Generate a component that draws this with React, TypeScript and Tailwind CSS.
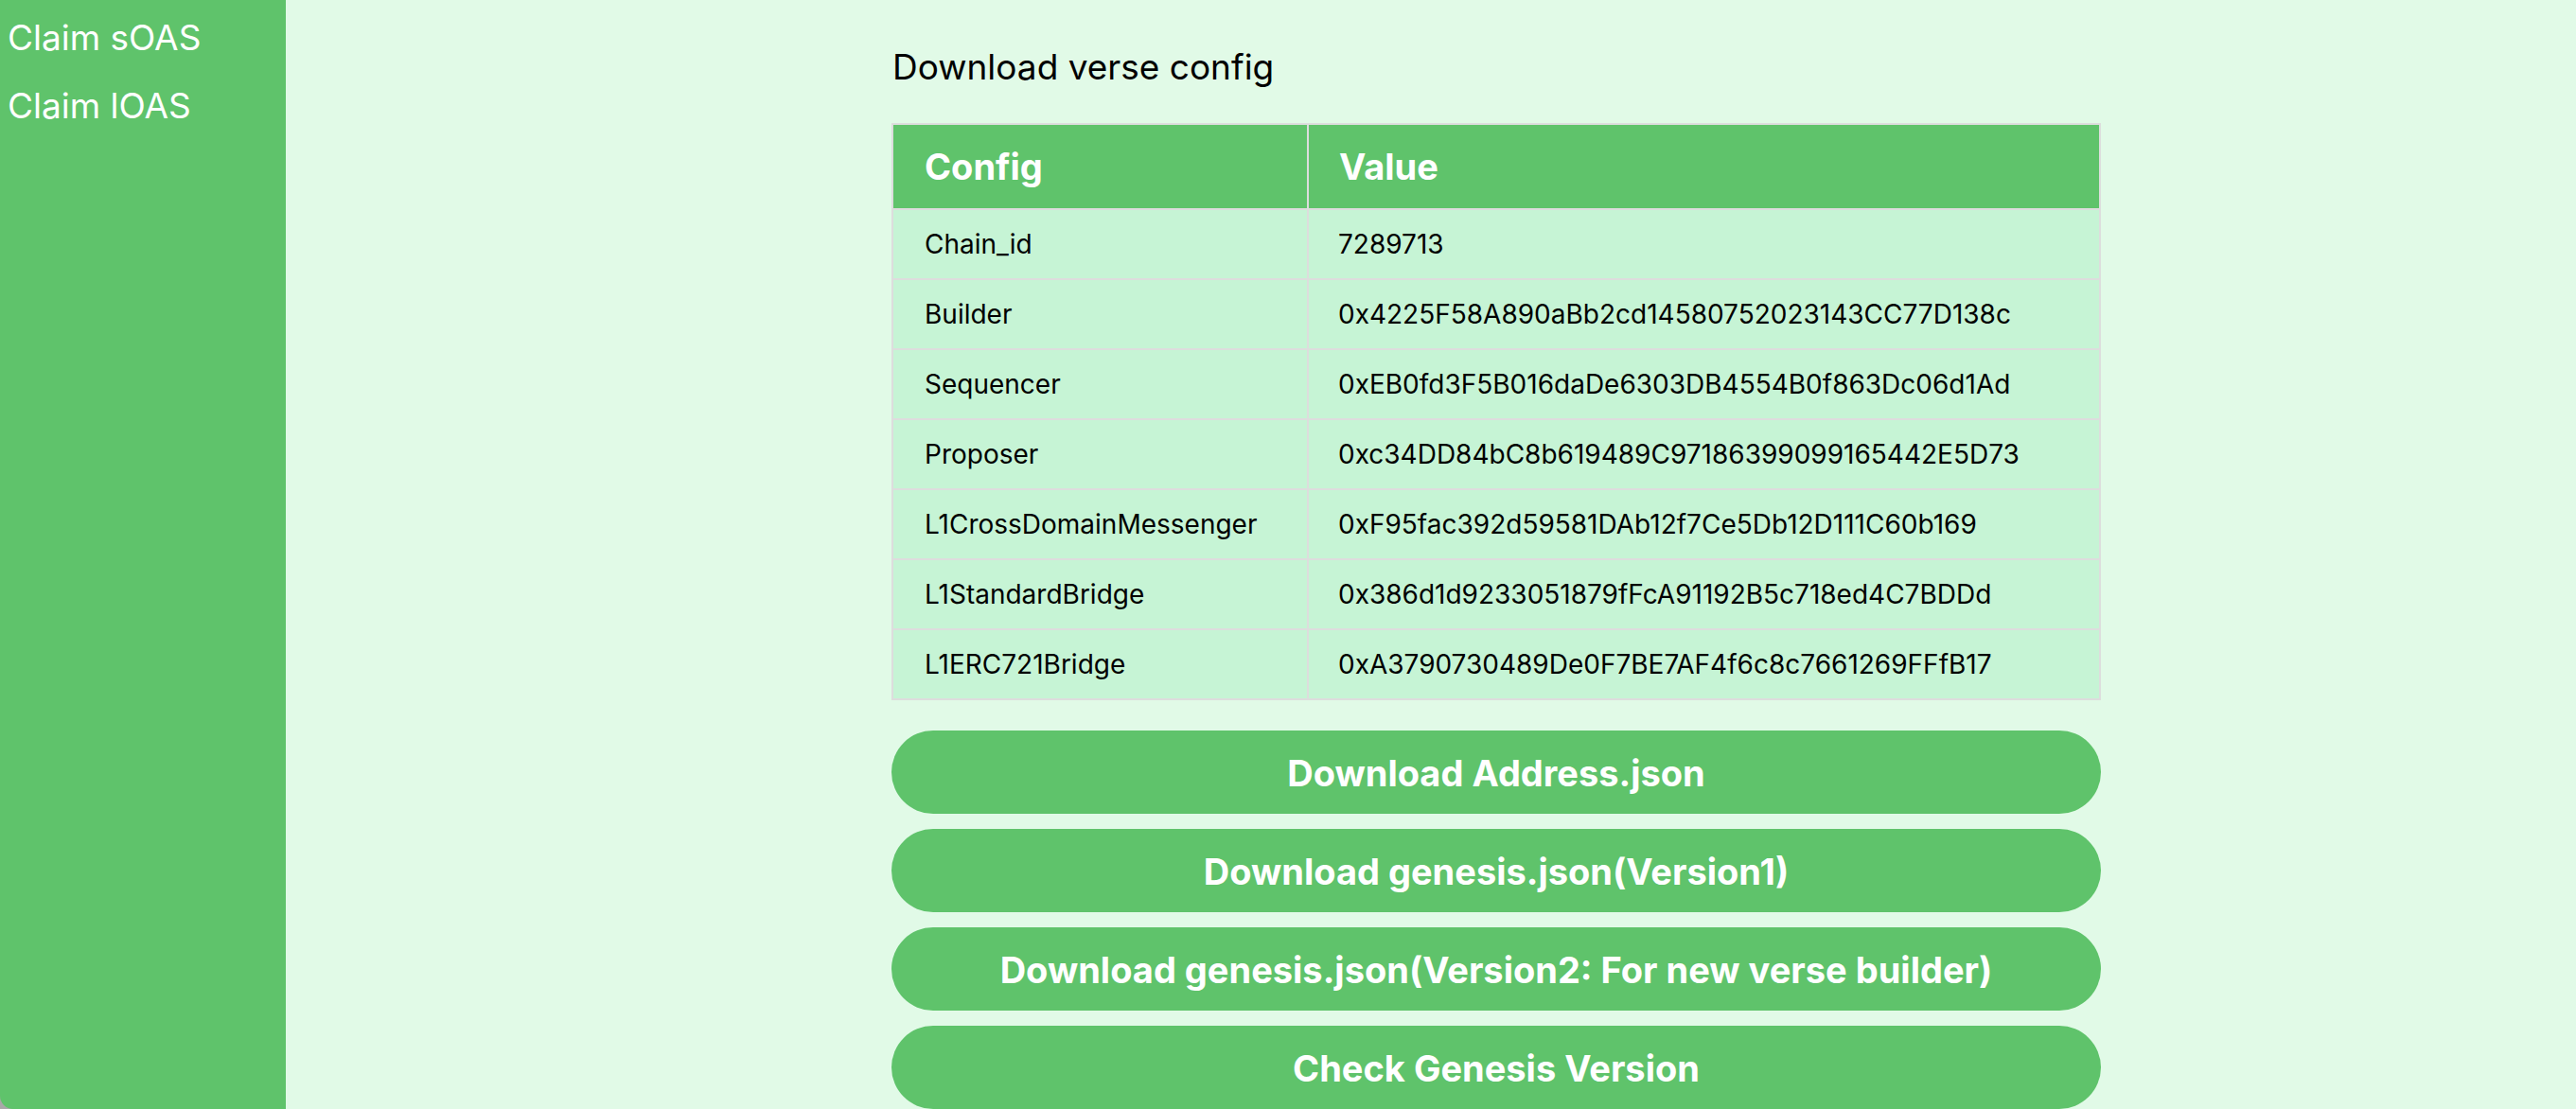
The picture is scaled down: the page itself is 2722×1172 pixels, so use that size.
import React from "react";

const rows: [string, string][] = [
  ["Chain_id", "7289713"],
  ["Builder", "0x4225F58A890aBb2cd14580752023143CC77D138c"],
  ["Sequencer", "0xEB0fd3F5B016daDe6303DB4554B0f863Dc06d1Ad"],
  ["Proposer", "0xc34DD84bC8b619489C97186399099165442E5D73"],
  ["L1CrossDomainMessenger", "0xF95fac392d59581DAb12f7Ce5Db12D111C60b169"],
  ["L1StandardBridge", "0x386d1d9233051879fFcA91192B5c718ed4C7BDDd"],
  ["L1ERC721Bridge", "0xA3790730489De0F7BE7AF4f6c8c7661269FFfB17"],
];

const buttons = [
  "Download Address.json",
  "Download genesis.json(Version1)",
  "Download genesis.json(Version2: For new verse builder)",
  "Check Genesis Version",
];

export default function App() {
  return (
    <div className="w-[2722px] h-[1172px] bg-[#a8a8a8] overflow-hidden" style={{ fontFamily: "Inter, 'Noto Sans', sans-serif" }}>
      <div className="flex w-full h-full rounded-bl-[14px] overflow-hidden">
        <aside className="w-[302px] shrink-0 bg-[#5fc36b] pt-[4px] pl-[8px] text-white">
          <div className="text-[37px] leading-[72px]">Claim sOAS</div>
          <div className="text-[37px] leading-[72px]">Claim lOAS</div>
        </aside>
        <main className="flex-1 bg-[#e1fae7] pl-[640px] pt-[52px]">
          <div className="w-[1278px] flex flex-col">
            <h1 className="text-[37px] leading-none text-black h-[38px] pl-[1px]">Download verse config</h1>
            <div className="mt-[40px] bg-[#dddddd] p-[2px] grid grid-cols-[437px_1fr] gap-[2px]">
              <div className="h-[88px] bg-[#5fc36b] flex items-center pl-[33px] text-white font-bold text-[38px]">Config</div>
              <div className="h-[88px] bg-[#5fc36b] flex items-center pl-[32px] text-white font-bold text-[38px]">Value</div>
              {rows.map(([k, v]) => (
                <React.Fragment key={k}>
                  <div className="h-[72px] bg-[#c6f4d5] flex items-center pl-[33px] text-black text-[28px]">{k}</div>
                  <div className="h-[72px] bg-[#c6f4d5] flex items-center pl-[31px] text-black text-[28px]">{v}</div>
                </React.Fragment>
              ))}
            </div>
            <div className="mt-[32px] flex flex-col gap-[16px]">
              {buttons.map((b) => (
                <button key={b} className="h-[88px] w-full rounded-full bg-[#5fc36b] text-white font-bold text-[38px] flex items-center justify-center pt-[2px]">
                  {b}
                </button>
              ))}
            </div>
          </div>
        </main>
      </div>
    </div>
  );
}
